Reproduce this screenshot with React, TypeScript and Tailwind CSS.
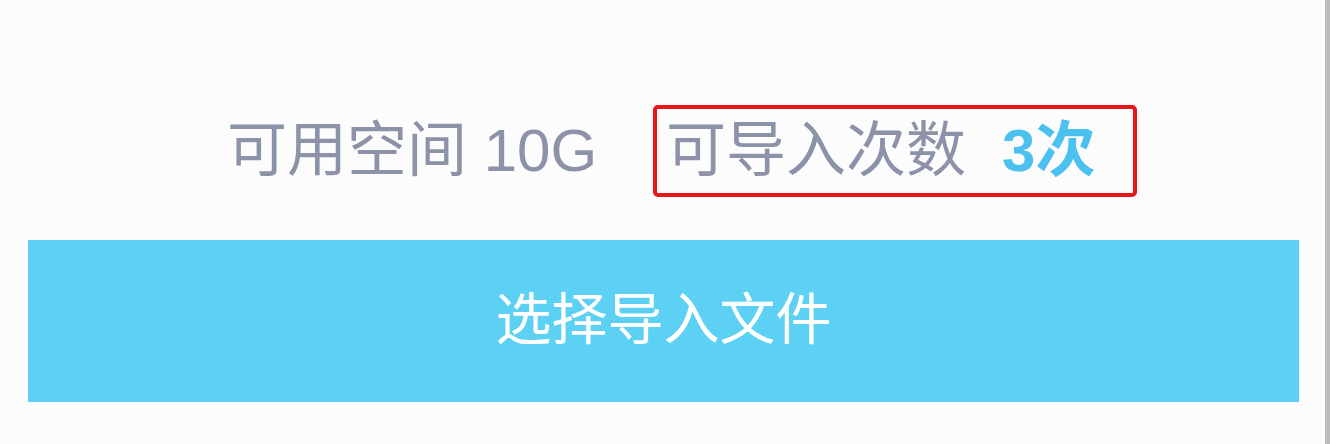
export default function App() {
  return (
    <div
      className="w-[1330px] h-[444px] bg-[#fcfcfd] border-r-[5px] border-[#bcbcbc] overflow-hidden"
      style={{ fontFamily: '"Liberation Sans", "Noto Sans CJK SC", sans-serif' }}
    >
      <div className="flex items-center pt-[105px] pl-[227px]">
        <span className="text-[60px] leading-none text-[#8c93a8] whitespace-nowrap">可用空间 10G</span>
        <div className="ml-[56px] flex items-center h-[92px] w-[484px] pl-[9px] border-[4px] border-[#e8141a] rounded-[5px]">
          <span className="text-[60px] leading-none text-[#8c93a8] whitespace-nowrap">可导入次数</span>
          <span className="ml-[36px] text-[60px] leading-none font-bold text-[#4cc1ef] whitespace-nowrap">3次</span>
        </div>
      </div>
      <div className="mt-[43px] ml-[28px] w-[1271px] h-[162px] pb-[3px] bg-[#5dd1f4] flex items-center justify-center">
        <span className="text-[56px] leading-none text-white">选择导入文件</span>
      </div>
    </div>
  )
}
